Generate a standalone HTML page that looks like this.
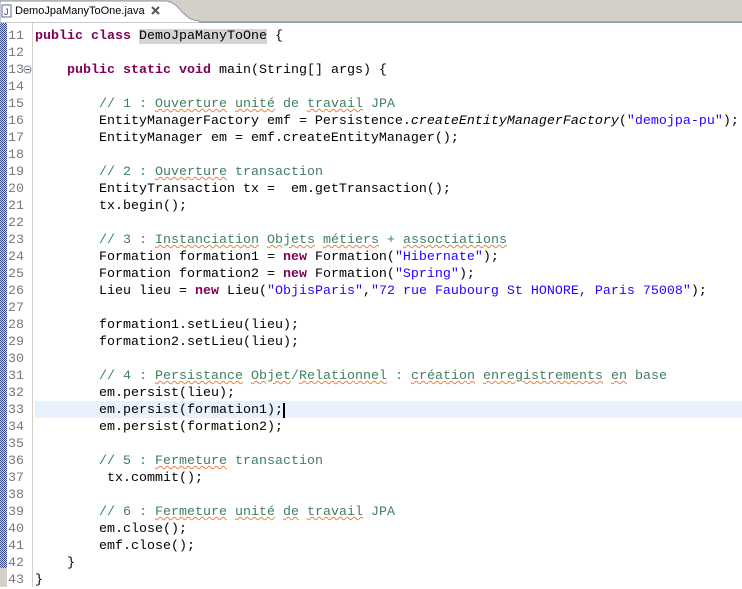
<!DOCTYPE html><html><head><style>
body{margin:0;width:742px;height:587px;overflow:hidden;background:#fff;position:relative;font-family:"Liberation Mono",monospace;}
#tabbar{position:absolute;left:0;top:0;width:742px;height:21px;background:#d4d0c8;}
#tabline{position:absolute;left:0;top:21px;width:742px;height:2px;background:#9aa3bd;}
#tab{position:absolute;left:0;top:0;width:200px;height:23px;}
#tabtext{position:absolute;left:15px;top:5px;font:11px "Liberation Sans",sans-serif;color:#000;}
#strip{position:absolute;left:0;top:23px;width:7px;height:545px;background:repeating-conic-gradient(#3a4c8c 0 25%,#c8cde0 0 50%) 0 0/2px 2px;}
#strip2{position:absolute;left:0;top:568px;width:7px;height:19px;background:#d4d0c8;}
#sep{position:absolute;left:32px;top:23px;width:1px;height:564px;background:#d4d0c8;}
.ln{position:absolute;left:8px;width:24px;font-size:13.33px;color:#787878;line-height:17px;}
.cl{position:absolute;left:35px;font-size:13.33px;line-height:17px;white-space:pre;color:#000;}
.k{color:#7f0055;font-weight:bold}.c{color:#3f7f5f}.s{color:#2a00ff}.i{font-style:italic}
.u{text-decoration:underline wavy #f08040;text-decoration-thickness:1px}
#cur{position:absolute;left:35px;top:401px;width:707px;height:17px;background:#e8f2fe;}
</style></head><body>
<div id="tabbar"></div><div id="tabline"></div>
<svg id="tab" width="200" height="23"><path d="M0 23 V1 H165 C180 1 182 21 200 21 V23 Z" fill="#fff" stroke="#8c93a8"/><rect x="2" y="5" width="9" height="12" fill="#fff" stroke="#5a6c9a"/><text x="4" y="15" font-size="9" fill="#2a4b9b" font-family="Liberation Sans">J</text><path d="M152 7 l7 7 M159 7 l-7 7" stroke="#555" stroke-width="2"/></svg>
<div id="tabtext">DemoJpaManyToOne.java</div>
<div id="strip"></div><div id="strip2"></div><div id="sep"></div>
<div id="cur"></div>
<div class="ln" style="top:28px">11<br>12<br>13<br>14<br>15<br>16<br>17<br>18<br>19<br>20<br>21<br>22<br>23<br>24<br>25<br>26<br>27<br>28<br>29<br>30<br>31<br>32<br>33<br>34<br>35<br>36<br>37<br>38<br>39<br>40<br>41<br>42<br>43</div>
<svg style="position:absolute;left:23px;top:65px" width="9" height="9"><circle cx="4.5" cy="4.5" r="3.5" fill="#fff" stroke="#7a8aa8"/><path d="M2.5 4.5h4" stroke="#445"/></svg>
<div class="cl" style="top:28px"><span class="k">public</span> <span class="k">class</span> <span style="background:#d4d4d4">DemoJpaManyToOne</span> {

    <span class="k">public</span> <span class="k">static</span> <span class="k">void</span> main(String[] args) {

        <span class="c">// 1 : <span class="u">Ouverture</span> <span class="u">unité</span> de <span class="u">travail</span> JPA</span>
        EntityManagerFactory emf = Persistence.<span class="i">createEntityManagerFactory</span>(<span class="s">"demojpa-pu"</span>);
        EntityManager em = emf.createEntityManager();

        <span class="c">// 2 : <span class="u">Ouverture</span> transaction</span>
        EntityTransaction tx =  em.getTransaction();
        tx.begin();

        <span class="c">// 3 : <span class="u">Instanciation</span> <span class="u">Objets</span> <span class="u">métiers</span> + <span class="u">assoctiations</span></span>
        Formation formation1 = <span class="k">new</span> Formation(<span class="s">"Hibernate"</span>);
        Formation formation2 = <span class="k">new</span> Formation(<span class="s">"Spring"</span>);
        Lieu lieu = <span class="k">new</span> Lieu(<span class="s">"ObjisParis"</span>,<span class="s">"72 rue Faubourg St HONORE, Paris 75008"</span>);

        formation1.setLieu(lieu);
        formation2.setLieu(lieu);

        <span class="c">// 4 : <span class="u">Persistance</span> <span class="u">Objet</span>/<span class="u">Relationnel</span> : <span class="u">création</span> <span class="u">enregistrements</span> <span class="u">en</span> base</span>
        em.persist(lieu);
        em.persist(formation1);<span style="border-left:2px solid #000"></span>
        em.persist(formation2);

        <span class="c">// 5 : <span class="u">Fermeture</span> transaction</span>
         tx.commit();

        <span class="c">// 6 : <span class="u">Fermeture</span> <span class="u">unité</span> <span class="u">de</span> <span class="u">travail</span> JPA</span>
        em.close();
        emf.close();
    }
}</div>
</body></html>
